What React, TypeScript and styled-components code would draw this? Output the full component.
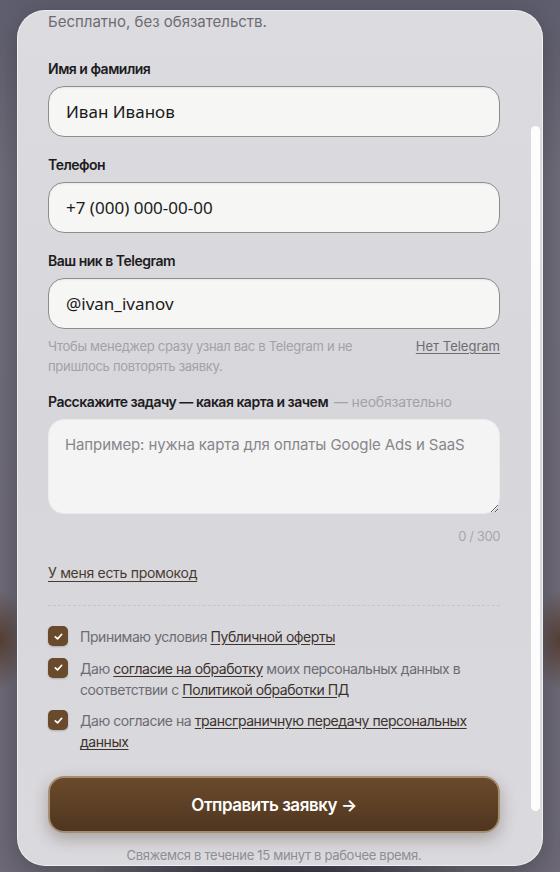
import React from 'react';
import styled, { createGlobalStyle } from 'styled-components';

const GlobalStyle = createGlobalStyle`
  html, body {
    margin: 0;
    padding: 0;
    height: 100%;
  }
  body {
    font-family: Inter, "Noto Sans", sans-serif;
    overflow: hidden;
  }
  #root {
    height: 100%;
  }
`;

const Backdrop = styled.div`
  height: 872px;
  box-sizing: border-box;
  padding: 10px 17px 6px 17px;
  background:
    radial-gradient(ellipse 30px 50px at 0px 640px, rgba(80, 50, 30, 0.75), transparent),
    radial-gradient(ellipse 30px 50px at 560px 640px, rgba(80, 50, 30, 0.75), transparent),
    radial-gradient(ellipse 200px 30px at 280px 880px, rgba(30, 30, 38, 0.9), transparent),
    linear-gradient(180deg, #5f5e6e 0%, #716e7b 20%, #6e6b77 100%);
`;

const Card = styled.div`
  position: relative;
  height: 856px;
  box-sizing: border-box;
  border-radius: 28px;
  background: linear-gradient(180deg, #dcdbe0 0%, #d7d6db 50%, #dad9de 100%);
  border: 1px solid rgba(255, 255, 255, 0.55);
  box-shadow: 0 8px 30px rgba(20, 20, 30, 0.35);
  overflow: hidden;
`;

const Scroll = styled.div`
  display: flex;
  flex-direction: column;
  padding: 1px 42px 0 30px;
`;

const ScrollThumb = styled.div`
  position: absolute;
  right: 2px;
  top: 115px;
  width: 9px;
  height: 685px;
  border-radius: 5px;
  background: #fdfdfd;
`;

const Intro = styled.p`
  margin: 0;
  font-size: 15px;
  line-height: 20px;
  color: #6d6c72;
`;

const Field = styled.div<{ $top: number }>`
  display: flex;
  flex-direction: column;
  gap: 8px;
  margin-top: ${p => p.$top}px;
`;

const Label = styled.label`
  font-size: 14px;
  line-height: 18px;
  font-weight: 600;
  color: #1d1c22;
  letter-spacing: -0.5px;
`;

const Optional = styled.span`
  font-weight: 400;
  color: #a3a2a8;
  margin-left: 6px;
  letter-spacing: -0.2px;
`;

const Input = styled.input`
  height: 51px;
  box-sizing: border-box;
  width: 100%;
  padding: 0 17px;
  border: 1px solid #8d8c90;
  border-radius: 16px;
  background: #f6f6f5;
  font-family: "Noto Sans", sans-serif;
  font-size: 17px;
  color: #1c1b20;
  outline: none;
  box-shadow: inset 0 1px 2px rgba(0, 0, 0, 0.06);
`;

const Hint = styled.div`
  display: flex;
  justify-content: space-between;
  align-items: flex-start;
  gap: 24px;
  margin-top: 7px;
`;

const HintText = styled.p`
  margin: 0;
  max-width: 320px;
  font-size: 13px;
  line-height: 20px;
  color: #a3a2a8;
  letter-spacing: -0.3px;
`;

const HintLink = styled.a`
  font-size: 13px;
  line-height: 20px;
  color: #6d6c72;
  text-decoration: underline;
  text-underline-offset: 2px;
  white-space: nowrap;
`;

const TextArea = styled.textarea`
  height: 95px;
  box-sizing: border-box;
  width: 100%;
  padding: 13px 16px;
  border: 1px solid #ebebeb;
  border-radius: 16px;
  background: #f4f4f4;
  font-family: Inter, sans-serif;
  font-size: 15px;
  line-height: 24px;
  letter-spacing: -0.1px;
  color: #1c1b20;
  resize: vertical;
  outline: none;

  &::placeholder {
    color: #87868b;
  }
`;

const Counter = styled.div`
  text-align: right;
  font-size: 13px;
  line-height: 20px;
  color: #a8a7ac;
  letter-spacing: -0.4px;
  margin-top: 12px;
`;

const Promo = styled.a`
  align-self: flex-start;
  margin-top: 17px;
  font-size: 14px;
  line-height: 20px;
  color: #4a3b30;
  letter-spacing: -0.3px;
  text-decoration: underline;
  text-underline-offset: 3px;
`;

const Divider = styled.hr`
  margin: 22px 0 0 0;
  border: none;
  border-top: 1px dashed #c6c5ca;
`;

const Consents = styled.div`
  display: flex;
  flex-direction: column;
  gap: 10.5px;
  margin-top: 20px;
`;

const ConsentRow = styled.label`
  display: flex;
  align-items: flex-start;
  gap: 12px;
  font-size: 14px;
  line-height: 21px;
  color: #6d6c72;
  letter-spacing: -0.45px;
`;

const Box = styled.span`
  flex: none;
  width: 20px;
  height: 20px;
  border-radius: 5px;
  background: #6a4a2d;
  display: flex;
  align-items: center;
  justify-content: center;
  box-shadow: 0 1px 2px rgba(0, 0, 0, 0.2);
`;

const Link = styled.a`
  color: #3c332d;
  text-decoration: underline;
  text-underline-offset: 2px;
`;

const Submit = styled.button`
  margin-top: 24px;
  height: 57px;
  width: 100%;
  border-radius: 16px;
  border: 2px solid #a58d72;
  background: linear-gradient(180deg, #6b4a2b 0%, #4f3620 100%);
  color: #ffffff;
  font-family: Inter, sans-serif;
  font-size: 17px;
  font-weight: 600;
  letter-spacing: -0.45px;
  box-shadow: 0 6px 16px rgba(60, 40, 20, 0.3);
  cursor: pointer;
`;

const Footnote = styled.p`
  margin: 13px 0 0 0;
  text-align: center;
  font-size: 13px;
  line-height: 18px;
  letter-spacing: -0.3px;
  color: #8e8d93;
`;

const Check = () => (
  <svg width="11" height="11" viewBox="0 0 12 12" fill="none">
    <path d="M2.5 6.3 L5 8.6 L9.5 3.6" stroke="#fff" strokeWidth="1.8" strokeLinecap="round" strokeLinejoin="round" />
  </svg>
);

const App: React.FC = () => {
  return (
    <>
      <GlobalStyle />
      <Backdrop>
        <Card>
          <ScrollThumb />
          <Scroll>
            <Intro>Бесплатно, без обязательств.</Intro>

            <Field $top={28}>
              <Label>Имя и фамилия</Label>
              <Input defaultValue="Иван Иванов" />
            </Field>

            <Field $top={19}>
              <Label>Телефон</Label>
              <Input defaultValue="+7 (000) 000-00-00" />
            </Field>

            <Field $top={19}>
              <Label>Ваш ник в Telegram</Label>
              <Input defaultValue="@ivan_ivanov" />
            </Field>
            <Hint>
              <HintText>Чтобы менеджер сразу узнал вас в Telegram и не пришлось повторять заявку.</HintText>
              <HintLink>Нет Telegram</HintLink>
            </Hint>

            <Field $top={17}>
              <Label>
                Расскажите задачу — какая карта и зачем<Optional>— необязательно</Optional>
              </Label>
              <TextArea placeholder="Например: нужна карта для оплаты Google Ads и SaaS" />
            </Field>
            <Counter>0 / 300</Counter>

            <Promo>У меня есть промокод</Promo>
            <Divider />

            <Consents>
              <ConsentRow>
                <Box><Check /></Box>
                <span>Принимаю условия <Link>Публичной оферты</Link></span>
              </ConsentRow>
              <ConsentRow>
                <Box><Check /></Box>
                <span>
                  Даю <Link>согласие на обработку</Link> моих персональных данных в соответствии с{' '}
                  <Link>Политикой обработки ПД</Link>
                </span>
              </ConsentRow>
              <ConsentRow>
                <Box><Check /></Box>
                <span>
                  Даю согласие на <Link>трансграничную передачу персональных данных</Link>
                </span>
              </ConsentRow>
            </Consents>

            <Submit>Отправить заявку →</Submit>
            <Footnote>Свяжемся в течение 15 минут в рабочее время.</Footnote>
          </Scroll>
        </Card>
      </Backdrop>
    </>
  );
};

export default App;
